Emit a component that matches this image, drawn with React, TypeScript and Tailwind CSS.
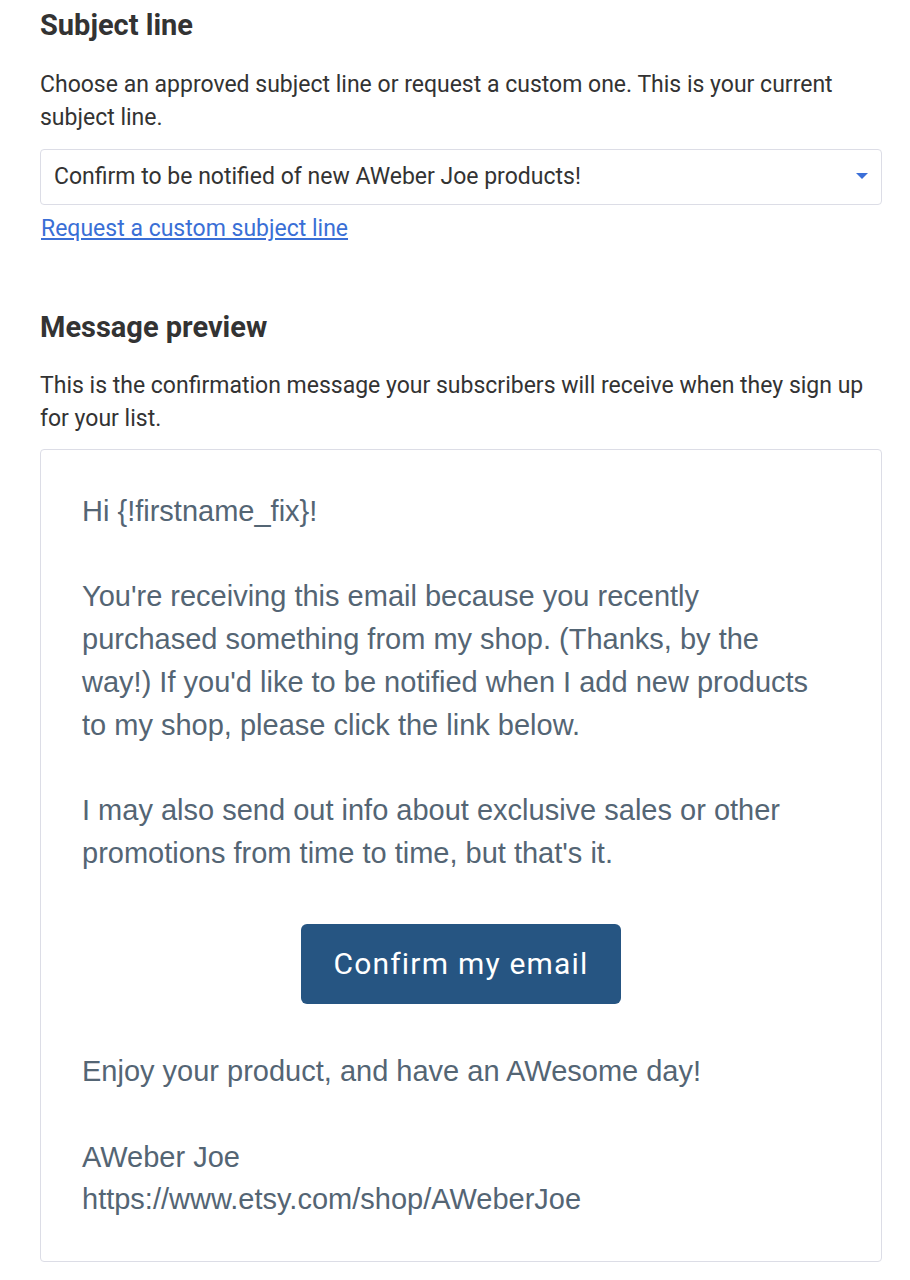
import React from "react";

const ui = { fontFamily: "Roboto, 'Liberation Sans', sans-serif" };
const mail = { fontFamily: "'Liberation Sans', Arial, Helvetica, sans-serif" };

const SubjectSelect = () => (
  <div className="relative mt-[15px] flex h-[56px] items-center rounded-[4px] border border-[#dcdde6] bg-white pl-[13px] pr-[40px]">
    <span className="text-[23px] text-[#333333]">Confirm to be notified of new AWeber Joe products!</span>
    <svg className="absolute right-[13px] top-[23px]" width="12" height="7" viewBox="0 0 12 7">
      <path d="M0 0h12L6 6z" fill="#3b6fd8" />
    </svg>
  </div>
);

const App = () => {
  return (
    <div className="min-h-[1280px] w-[910px] bg-white pl-[40px] pr-[28px] pt-[7px] text-[#333333]" style={ui}>
      <h2 className="text-[29px] font-bold leading-[36px]">Subject line</h2>
      <p className="mt-[25px] text-[23px] leading-[33px]">
        Choose an approved subject line or request a custom one. This is your current subject line.
      </p>
      <SubjectSelect />
      <a href="#" className="mt-[10px] ml-[1px] block text-[23px] leading-[28px] text-[#3a6fd6] underline">
        Request a custom subject line
      </a>

      <h2 className="mt-[66px] text-[29px] font-bold leading-[36px]">Message preview</h2>
      <p className="mt-[24px] text-[23px] leading-[33px]">
        This is the confirmation message your subscribers will receive when they sign up for your list.
      </p>

      <div className="mt-[14px] h-[813px] rounded-[4px] border border-[#dcdde6] bg-white px-[41px] pt-[40px]">
        <div className="pr-[14px] text-[29px] leading-[42.7px] text-[#546574]" style={mail}>
          <p>Hi {"{!firstname_fix}"}!</p>
          <br />
          <p>
            You're receiving this email because you recently purchased something from my shop. (Thanks, by the way!) If
            you'd like to be notified when I add new products to my shop, please click the link below.
          </p>
          <br />
          <p>I may also send out info about exclusive sales or other promotions from time to time, but that's it.</p>
          <div className="-mr-[14px] mt-[50px] mb-[46px] flex justify-center">
            <button
              className="h-[80px] w-[320px] rounded-[6px] bg-[#265582] text-[30px] tracking-[1.2px] text-white"
              style={ui}
            >
              Confirm my email
            </button>
          </div>
          <p>Enjoy your product, and have an AWesome day!</p>
          <br />
          <p>AWeber Joe</p>
          <p>https://www.etsy.com/shop/AWeberJoe</p>
        </div>
      </div>
    </div>
  );
};

export default App;
